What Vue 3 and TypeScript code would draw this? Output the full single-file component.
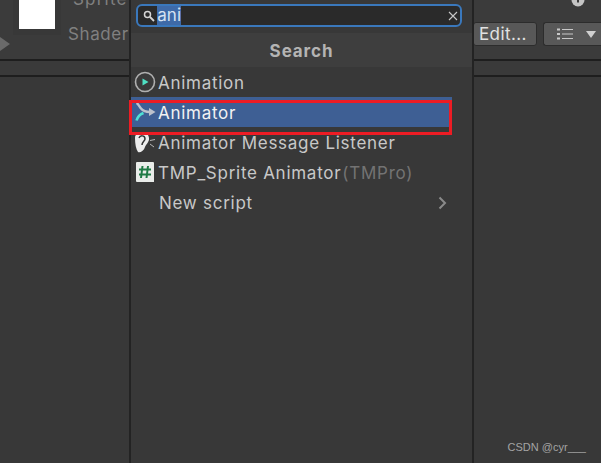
<script setup lang="ts">
interface Row {
  label: string;
  icon?: string;
  suffix?: string;
  selected?: boolean;
  more?: boolean;
}

const rows: Row[] = [
  { label: 'Animation', icon: 'play' },
  { label: 'Animator', icon: 'animator', selected: true },
  { label: 'Animator Message Listener', icon: 'ear' },
  { label: 'TMP_Sprite Animator', icon: 'hash', suffix: '(TMPro)' },
  { label: 'New script', more: true },
];
</script>

<template>
  <div class="page">
    <div class="inspector">
      <div class="head">
        <div class="arrow"></div>
        <div class="thumb-box"><div class="thumb"></div></div>
        <div class="names">
          <div class="sprite-name">Sprite</div>
          <div class="shader-name">Shader</div>
        </div>
        <div class="head-right">
          <div class="top-icons">
            <svg width="16" height="7" viewBox="0 0 16 7">
              <path d="M1.500 0a6.500 6.500 0 0 0 13 0z" fill="#c4c4c4" />
              <path d="M7 0h2v2.500H7z" fill="#3a3a3a" />
            </svg>
          </div>
          <div class="tools">
            <div class="tool edit">Edit...</div>
            <div class="tool list-btn">
              <svg width="16" height="12" viewBox="0 0 16 12">
                <path d="M5 1.500h11M5 6h11M5 10.500h11" stroke="#c8c8c8" stroke-width="1" />
                <path d="M0 .5h3v2H0zM0 5h3v2H0zM0 9.500h3v2H0z" fill="#c8c8c8" />
              </svg>
              <span class="caret"></span>
            </div>
          </div>
        </div>
      </div>
      <div class="strip"></div>
    </div>

    <div class="popup">
      <div class="search-area">
        <div class="search">
          <svg class="glass" width="12" height="12" viewBox="0 0 12 12">
            <circle cx="4.500" cy="4.500" r="3" fill="none" stroke="#d6d6d6" stroke-width="1.500" />
            <path d="M7 7l4 4" stroke="#d6d6d6" stroke-width="1.800" />
          </svg>
          <span class="query">ani</span>
          <svg class="clear" width="10" height="10" viewBox="0 0 10 10">
            <path d="M1 1l8 8M9 1l-8 8" stroke="#c8c8c8" stroke-width="1.100" />
          </svg>
        </div>
      </div>
      <div class="title">Search</div>
      <ul class="list">
        <li v-for="row in rows" :key="row.label" class="row" :class="{ selected: row.selected, more: row.more }">
          <span class="icon">
            <svg v-if="row.icon === 'play'" width="22" height="22" viewBox="0 0 22 22">
              <circle cx="11" cy="11" r="9.500" fill="#3a3a3a" stroke="#b0b0b0" stroke-width="1.600" />
              <path d="M8.500 7.500l6 3.500-6 3.500z" fill="#4fe0c4" />
            </svg>
            <svg v-else-if="row.icon === 'animator'" width="22" height="22" viewBox="0 0 22 22">
              <path d="M2.500 2c2 1 2.500 3 4.500 5.500 2 2.500 4.500 3.500 9 3.500" fill="none" stroke="#bcc2cc" stroke-width="2.400" />
              <path d="M15 7l6.500 4-6.500 4z" fill="#bcc2cc" />
              <path d="M2.500 19.500c1-3.500 3-6 7-7.500" fill="none" stroke="#4fe0d4" stroke-width="2.600" />
            </svg>
            <svg v-else-if="row.icon === 'ear'" width="22" height="24" viewBox="0 0 22 24">
              <path d="M1 8C1 1 14 0 15 8c.5 4-3 6-4 9-1 4-5 6-7 5-2-3-3-8-3-14z" fill="#ececec" />
              <path d="M5 8c1-3 6-3 6 1 0 2-3 3-3 6" fill="none" stroke="#333" stroke-width="1.500" />
              <path d="M16 10.500l5-1M16 14l4 3" stroke="#b8b8b8" stroke-width="1" />
            </svg>
            <svg v-else-if="row.icon === 'hash'" width="18" height="20" viewBox="0 0 18 20">
              <path d="M1 0h16a1 1 0 0 1 1 1v19H1a1 1 0 0 1-1-1V1a1 1 0 0 1 1-1z" fill="#e9ece9" />
              <path d="M6.500 4L5 16M12 4l-1.500 12M3 7.500h12M3 12.500h12" stroke="#1f7a45" stroke-width="2" />
            </svg>
          </span>
          <span class="label">{{ row.label }}</span>
          <span v-if="row.suffix" class="suffix">{{ row.suffix }}</span>
          <svg v-if="row.more" class="chevron" width="9" height="14" viewBox="0 0 9 14">
            <path d="M1.500 1.500L7 7l-5.500 5.500" fill="none" stroke="#8a8a8a" stroke-width="2" />
          </svg>
        </li>
      </ul>
    </div>

    <div class="red-box"></div>
    <div class="mark">CSDN @cyr___</div>
  </div>
</template>

<style scoped>
.page {
  position: relative;
  width: 601px;
  height: 463px;
  overflow: hidden;
  background: #383838;
  font-family: Inter, "Noto Sans", sans-serif;
}

.head {
  display: flex;
  height: 59px;
  border-bottom: 2px solid #1e1e1e;
  box-sizing: content-box;
  background: #3b3b3b;
}

.strip {
  height: 14px;
  border-bottom: 2px solid #1e1e1e;
  background: #3a3a3a;
}

.arrow {
  width: 0;
  height: 0;
  margin-top: 37px;
  border-left: 10px solid #6a6a6a;
  border-top: 7px solid transparent;
  border-bottom: 7px solid transparent;
}

.thumb-box {
  width: 48px;
  height: 35px;
  margin-left: 3px;
  padding-left: 6px;
  box-sizing: border-box;
  background: #383838;
}

.thumb {
  width: 36px;
  height: 29px;
  background: #fff;
}

.names {
  margin-left: 7px;
  color: #808080;
  font-size: 17px;
}

.sprite-name {
  height: 9px;
  margin-top: -1px;
  margin-left: 5px;
  line-height: 0;
  letter-spacing: 1.2px;
}

.shader-name {
  margin-top: 16px;
  line-height: 20px;
  letter-spacing: 0.6px;
}

.head-right {
  margin-left: auto;
  width: 128px;
}

.top-icons {
  height: 22px;
  padding-left: 97px;
}

.top-icons svg {
  display: block;
}

.tools {
  display: flex;
  gap: 6px;
}

.tool {
  height: 24px;
  box-sizing: border-box;
  border: 1px solid #2c2c2c;
  border-radius: 3px;
  background: #585858;
  color: #e2e2e2;
  font-size: 17px;
  line-height: 22px;
}

.edit {
  width: 64px;
  padding-left: 5px;
  letter-spacing: 0.4px;
}

.list-btn {
  display: flex;
  align-items: center;
  flex: 1;
  padding-left: 13px;
  border-right: 0;
  border-radius: 3px 0 0 3px;
}

.caret {
  width: 0;
  height: 0;
  margin-left: 13px;
  border-top: 7px solid #d0d0d0;
  border-left: 5px solid transparent;
  border-right: 5px solid transparent;
}

.popup {
  position: absolute;
  left: 129px;
  top: 0;
  width: 345px;
  height: 463px;
  box-sizing: border-box;
  border-left: 2px solid #232323;
  border-right: 2px solid #232323;
  background: #383838;
}

.search-area {
  height: 33px;
  padding: 4px 10px 0 5px;
  box-sizing: border-box;
  background: #383838;
}

.search {
  display: flex;
  align-items: center;
  height: 23px;
  box-sizing: border-box;
  border: 2px solid #3a78bc;
  border-radius: 6px;
  padding-left: 5px;
  background: #2a2a2a;
}

.glass {
  flex: none;
}

.query {
  margin-left: 2px;
  height: 19px;
  padding: 0 0.3px;
  background: #3e6aa8;
  color: #d6e2f2;
  font-size: 17px;
  line-height: 18px;
}

.clear {
  margin-left: auto;
  margin-right: 2px;
}

.title {
  height: 34px;
  background: #3e3e3e;
  color: #b4b4b4;
  font-size: 17px;
  font-weight: 700;
  line-height: 36px;
  letter-spacing: 0.9px;
  text-align: center;
}

.list {
  margin: 0;
  padding: 0;
  list-style: none;
}

.row {
  display: flex;
  align-items: center;
  width: 321px;
  height: 30px;
  color: #c8c8c8;
  font-size: 17px;
  letter-spacing: 0.73px;
  white-space: nowrap;
}

.row.selected {
  background: #3e5f94;
  color: #f2f2f2;
}

.row.more .label {
  margin-left: 1px;
}

.label,
.suffix {
  padding-top: 2px;
}

.icon {
  display: flex;
  flex: none;
  align-items: center;
  justify-content: center;
  width: 27px;
  height: 26px;
}

.suffix {
  margin-left: 1px;
  color: #737373;
}

.chevron {
  position: absolute;
  left: 307px;
  margin-top: 1px;
}

.red-box {
  position: absolute;
  left: 129px;
  top: 100px;
  width: 323px;
  height: 35px;
  box-sizing: border-box;
  border: 3px solid #ed1c24;
}

.mark {
  position: absolute;
  right: 15px;
  bottom: 10px;
  color: #a4a4a4;
  font-family: "Liberation Sans", sans-serif;
  font-size: 11px;
}
</style>
